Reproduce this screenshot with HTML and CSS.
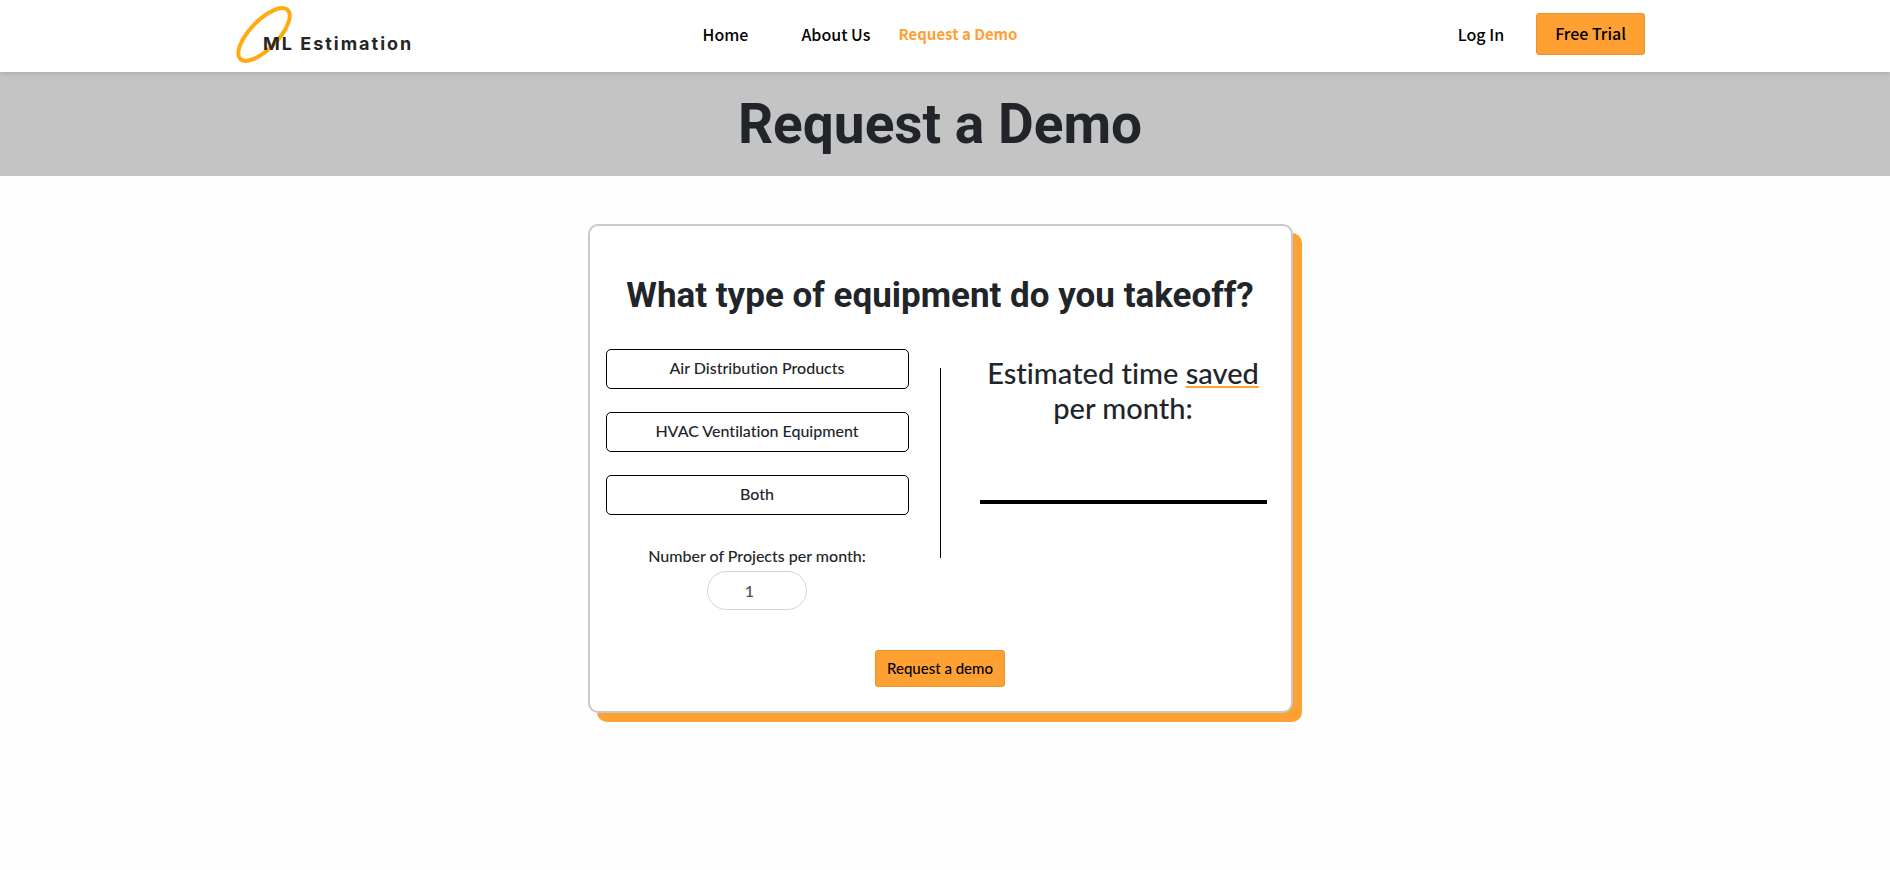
FILE: index.html
```html
<!DOCTYPE html>
<html lang="en">
<head>
<meta charset="utf-8">
<meta name="viewport" content="width=device-width, initial-scale=1">
<title>Request a Demo - ML Estimation</title>
<link rel="stylesheet" href="styles.css">
</head>
<body>
<header class="site-header">
  <div class="header-inner">
    <a class="logo" href="#">
      <svg class="logo-mark" viewBox="0 0 58 58" aria-hidden="true">
        <ellipse cx="29" cy="29.5" rx="34" ry="14" transform="rotate(-46 29 29.5)" fill="none" stroke="#ffab0f" stroke-width="4"/>
      </svg>
      <span class="logo-text">ML Estimation</span>
    </a>
    <nav class="main-nav">
      <a class="nav-link nav-home" href="#">Home</a>
      <a class="nav-link nav-about" href="#">About Us</a>
      <a class="nav-link active" href="#">Request a Demo</a>
    </nav>
    <div class="account">
      <a class="nav-link" href="#">Log In</a>
      <button class="trial" type="button">Free Trial</button>
    </div>
  </div>
</header>
<div class="banner"><h1>Request a Demo</h1></div>
<main class="content">
  <form class="card">
    <h2>What type of equipment do you takeoff?</h2>
    <div class="columns">
      <div class="choices">
        <button class="choice" type="button">Air Distribution Products</button>
        <button class="choice" type="button">HVAC Ventilation Equipment</button>
        <button class="choice" type="button">Both</button>
        <div class="field">
          <label for="projects">Number of Projects per month:</label>
          <input id="projects" type="number" value="1" min="1">
        </div>
      </div>
      <div class="divider"></div>
      <div class="estimate">
        <h3>Estimated time <span class="saved">saved</span> per month:</h3>
        <hr>
      </div>
    </div>
    <button class="submit" type="button">Request a demo</button>
  </form>
</main>
</body>
</html>
```
FILE: styles.css
```css
* { box-sizing: border-box; }

body {
  margin: 0;
  background: #fefefe;
  color: #212529;
  font-family: Lato, sans-serif;
  font-size: 16px;
  font-weight: 500;
  font-variant-ligatures: none;
}

h1, h2, h3 { margin: 0; }
button { font: inherit; font-variant-ligatures: none; color: #000; }

.site-header {
  position: relative;
  background: #fff;
  padding-right: 10px;
  box-shadow: 0 1px 6px rgba(0, 0, 0, 0.15);
}

.header-inner {
  width: 75%;
  height: 72px;
  margin: 0 auto;
  display: grid;
  grid-template-columns: 1fr auto 1fr;
  align-items: center;
}

.logo {
  display: flex;
  align-items: center;
  color: #262626;
  text-decoration: none;
}

.logo-mark { width: 58px; height: 58px; margin: 0 -30px 4px 0; }

.logo-text {
  position: relative;
  padding-top: 16px;
  font: 700 18px/24px Inter, sans-serif;
  letter-spacing: 2px;
  white-space: nowrap;
}

.main-nav, .account { display: flex; align-items: center; }

.main-nav { margin: 0 160px 4px 0; }

.nav-link, .trial {
  font: 500 16px/24px "Noto Sans CJK SC", sans-serif;
  color: #000;
  text-decoration: none;
  white-space: nowrap;
}

.nav-home { margin-right: 53px; }
.nav-about { margin-right: 28px; }
.nav-link.active { color: #ffa033; font-size: 15px; font-weight: 700; }

.account { justify-content: flex-end; gap: 32px; margin-bottom: 4px; }

.trial, .submit {
  background: #ffa033;
  border: 1px solid #e89230;
  border-radius: 3px;
}

.trial { height: 42px; padding: 0 18px 2px; }

.banner {
  background: #c4c4c4;
  padding: 18px 10px 18px 0;
  text-align: center;
}

.banner h1 { font: 700 55px/68px Roboto, sans-serif; }

.content { padding: 48px 10px 48px 0; }

.card {
  width: 37.5%;
  min-width: 680px;
  margin: 0 auto;
  padding: 48px 16px 24px;
  background: #fff;
  border: 2px solid #c8c8c8;
  border-radius: 10px;
  box-shadow: 9px 9px 0 #ffa033;
  text-align: center;
}

.card h2 { font: 700 35px/44px Roboto, sans-serif; }

.columns {
  display: grid;
  grid-template-columns: 1fr 1px 1fr;
  margin-top: 31px;
}

.choices {
  display: flex;
  flex-direction: column;
  gap: 23px;
  margin-right: 31px;
}

.choice {
  height: 40px;
  padding: 0 12px 4px;
  background: #fff;
  border: 1px solid #000;
  border-radius: 5px;
  color: #212529;
}

.field {
  display: flex;
  flex-direction: column;
  align-items: center;
  gap: 3px;
  margin-top: 6px;
}

.field label { line-height: 24px; }

.field input {
  width: 100px;
  height: 39px;
  padding: 6px 12px;
  background: #fff;
  border: 1px solid #ced4da;
  border-radius: 20px;
  font: inherit;
  color: #495057;
  text-align: center;
}

.divider { height: 190px; margin-top: 19px; background: #000; }

.estimate { padding: 6px 8px 0 39px; }

.estimate h3 { font-size: 29px; font-weight: 500; line-height: 35px; }

.saved {
  text-decoration: underline 2px #ffa033;
  text-decoration-skip-ink: none;
  text-underline-offset: 2px;
}

.estimate hr { margin: 75px 0 0; height: 4px; border: 0; background: #000; }

.submit { height: 37px; margin-top: 40px; padding: 0 11px 2px; font-size: 15px; }
```
